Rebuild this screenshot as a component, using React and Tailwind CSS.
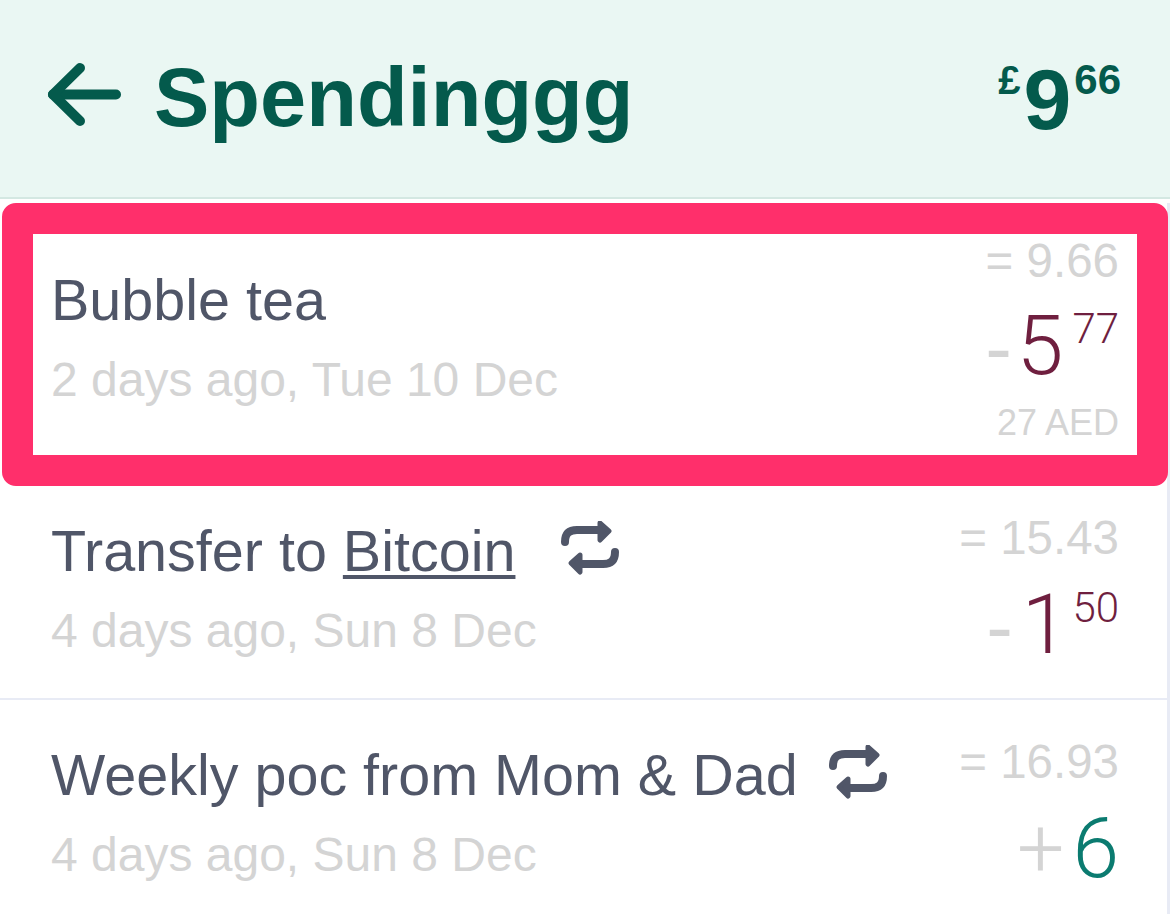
const Repeat = () => (
  <svg viewBox="0 0 60 60" className="w-[60px] h-[60px]" fill="none" stroke="#505668" strokeLinecap="round" strokeLinejoin="round">
    <path d="M5 21 C5 12 10 9 17 9 L40 9" strokeWidth="8" />
    <path d="M40 2 L49 10 L40 19 Z" fill="#505668" strokeWidth="5" />
    <path d="M55 31 C55 40 50 43 43 43 L20 43" strokeWidth="8" />
    <path d="M20 34 L11 42 L20 51 Z" fill="#505668" strokeWidth="5" />
  </svg>
);

const Amount = ({ sign, whole, pence, color, gap, penceGap }) => (
  <div className="flex items-start justify-end h-[84px] font-['Roboto',sans-serif] font-[350]">
    {sign === '-' ? (
      <span className="text-[80px] leading-[84px] mt-[2px] text-[#d4d4d4] font-['Liberation_Sans',sans-serif] font-normal">-</span>
    ) : (
      <span className="text-[84px] leading-[84px] text-[#d4d4d4]">{sign}</span>
    )}
    <span className={`text-[84px] leading-[84px] ${color} ${gap}`}>{whole}</span>
    {pence && <span className={`text-[42px] leading-[44px] ${color} mt-[3px] ${penceGap}`}>{pence}</span>}
  </div>
);

const Row = ({ title, date, total, sign, whole, pence, color, gap, penceGap, leftPad }) => (
  <div className="flex justify-between pl-[51px] pr-[48px]">
    <div className={`flex flex-col ${leftPad}`}>
      <div className="text-[57.5px] leading-[64px] text-[#505668] flex items-center">{title}</div>
      <div className="text-[48px] leading-[56px] text-[#d4d4d4] mt-[20px]">{date}</div>
    </div>
    <div className="flex flex-col items-end">
      <div className="text-[47.5px] leading-[54px] text-[#d4d4d4]">= {total}</div>
      <div className="mt-[18px]">
        <Amount sign={sign} whole={whole} pence={pence} color={color} gap={gap} penceGap={penceGap} />
      </div>
    </div>
  </div>
);

export default function App() {
  return (
    <div className="w-[1170px] h-[914px] overflow-hidden bg-white font-['Liberation_Sans',Arial,sans-serif]">
      <header className="h-[199px] bg-[#eaf7f3] border-b-2 border-[#d4e8e2] flex justify-between pl-[46px] pr-[49px] text-[#045a4c]">
        <div className="flex items-center h-[194px] gap-[30px]">
          <svg viewBox="0 0 78 68" className="w-[78px] h-[68px] mb-[4px]" fill="none" stroke="#045a4c" strokeWidth="10" strokeLinecap="round" strokeLinejoin="round">
            <path d="M7 33.5 L70 33.5" />
            <path d="M34 7 L7 33.5 L34 60" />
          </svg>
          <h1 className="text-[83px] leading-none font-bold">Spendinggg</h1>
        </div>
        <div className="flex items-start pt-[58px] font-bold">
          <span className="text-[40px] leading-[44px] mr-[3px]">£</span>
          <span className="text-[86px] leading-[88px] mt-[-3px]">9</span>
          <span className="text-[42px] leading-[44px] ml-[3px]">66</span>
        </div>
      </header>

      <div className="h-[715px] border-r-[3px] border-[#e8ebf5]">
        <div className="ml-[2px] mr-[-1px] mt-[4px] h-[283px] border-[31px] border-[#ff2f6b] rounded-[14px]">
          <div className="flex justify-between pl-[18px] pr-[18px]">
            <div className="flex flex-col pt-[34px]">
              <div className="text-[57.5px] leading-[64px] text-[#505668]">Bubble tea</div>
              <div className="text-[48px] leading-[56px] text-[#d4d4d4] mt-[20px]">2 days ago, Tue 10 Dec</div>
            </div>
            <div className="flex flex-col items-end">
              <div className="text-[47.5px] leading-[54px] text-[#d4d4d4]">= 9.66</div>
              <div className="mt-[16px]">
                <Amount sign="-" whole="5" pence="77" color="text-[#6f1f3f]" gap="ml-[5px]" penceGap="ml-[9px]" />
              </div>
              <div className="text-[36px] leading-[40px] text-[#d4d4d4] mt-[15px]">27 AED</div>
            </div>
          </div>
        </div>

        <div className="h-[212px] pt-[25px]">
          <Row
            title={<><span>Transfer to <span className="underline decoration-[4px] underline-offset-[4px]">Bitcoin</span></span><span className="ml-[45px]"><Repeat /></span></>}
            date="4 days ago, Sun 8 Dec"
            total="15.43"
            sign="-"
            whole="1"
            pence="50"
            color="text-[#6f1f3f]"
            gap="ml-[9px]"
            penceGap="ml-[4px]"
            leftPad="pt-[8px]"
          />
        </div>
        <div className="h-[2px] bg-[#e8ebf5]" />
        <div className="pt-[35px]">
          <Row
            title={<><span>Weekly poc from Mom &amp; Dad</span><span className="ml-[30px]"><Repeat /></span></>}
            date="4 days ago, Sun 8 Dec"
            total="16.93"
            sign="+"
            whole="6"
            color="text-[#0b7b70]"
            gap="ml-[8px]"
            leftPad="pt-[8px]"
          />
        </div>
      </div>
    </div>
  );
}
